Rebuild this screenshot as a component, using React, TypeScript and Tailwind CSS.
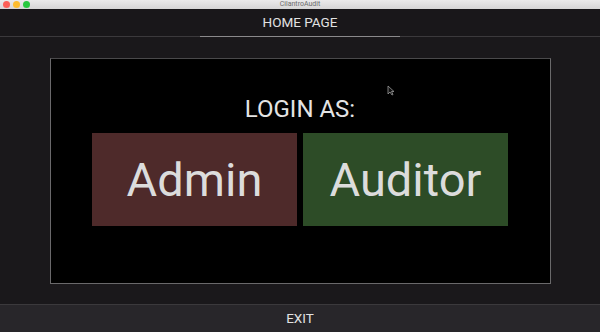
import React from 'react';

const TrafficLight = ({ color }: { color: string }) => (
  <span className={`h-[7px] w-[7px] rounded-full ${color}`} />
);

const RoleButton = ({ label, bg }: { label: string; bg: string }) => (
  <button
    className={`flex h-[93px] w-[205px] items-center justify-center ${bg} text-[47px] leading-none text-[#dcdcdc]`}
  >
    {label}
  </button>
);

const App = () => {
  return (
    <div
      className="flex h-[332px] w-[600px] flex-col overflow-hidden bg-[#1a181b]"
      style={{ fontFamily: 'Roboto, "Liberation Sans", sans-serif' }}
    >
      {/* window chrome */}
      <div className="relative flex h-[9px] items-center bg-gradient-to-b from-[#ebeaeb] to-[#d6d5d6] px-[3px]">
        <div className="flex gap-[3px]">
          <TrafficLight color="bg-[#fc5f57]" />
          <TrafficLight color="bg-[#fdbc2e]" />
          <TrafficLight color="bg-[#28c840]" />
        </div>
        <span className="absolute inset-x-0 text-center text-[7px] leading-none text-[#6b6b6b]">
          CilantroAudit
        </span>
      </div>

      {/* header */}
      <div className="flex h-[27px] items-center justify-center bg-[#19171a] text-[13.5px] text-[#e2e2e2]">
        HOME PAGE
      </div>
      <div className="flex h-px justify-center bg-[#3b393c]">
        <div className="h-px w-[200px] bg-[#8a898b]" />
      </div>

      {/* content */}
      <div className="relative flex flex-1 items-start justify-center pt-[21px]">
        <div className="flex h-[226px] w-[501px] flex-col items-center border border-[#6a696b] border-t-[#4a494b] bg-black pt-[38px]">
          <div className="text-[24px] leading-none text-[#e4e4e4]">LOGIN AS:</div>
          <div className="mt-[12px] flex gap-[6px]">
            <RoleButton label="Admin" bg="bg-[#4e2a2a]" />
            <RoleButton label="Auditor" bg="bg-[#2d4c27]" />
          </div>
        </div>
        <svg className="absolute left-[387px] top-[48px]" width="8" height="11" viewBox="0 0 8 11">
          <path d="M1 1 L1 9 L3 7 L5 10 L6 9.5 L4.5 6.5 L7 6.5 Z" fill="#111" stroke="#9a9a9a" strokeWidth="0.8" />
        </svg>
      </div>

      {/* footer */}
      <div className="flex h-[28px] items-center justify-center border-t border-[#3b393c] bg-[#28262a] text-[13.5px] text-[#e2e2e2]">
        EXIT
      </div>
    </div>
  );
};

export default App;
